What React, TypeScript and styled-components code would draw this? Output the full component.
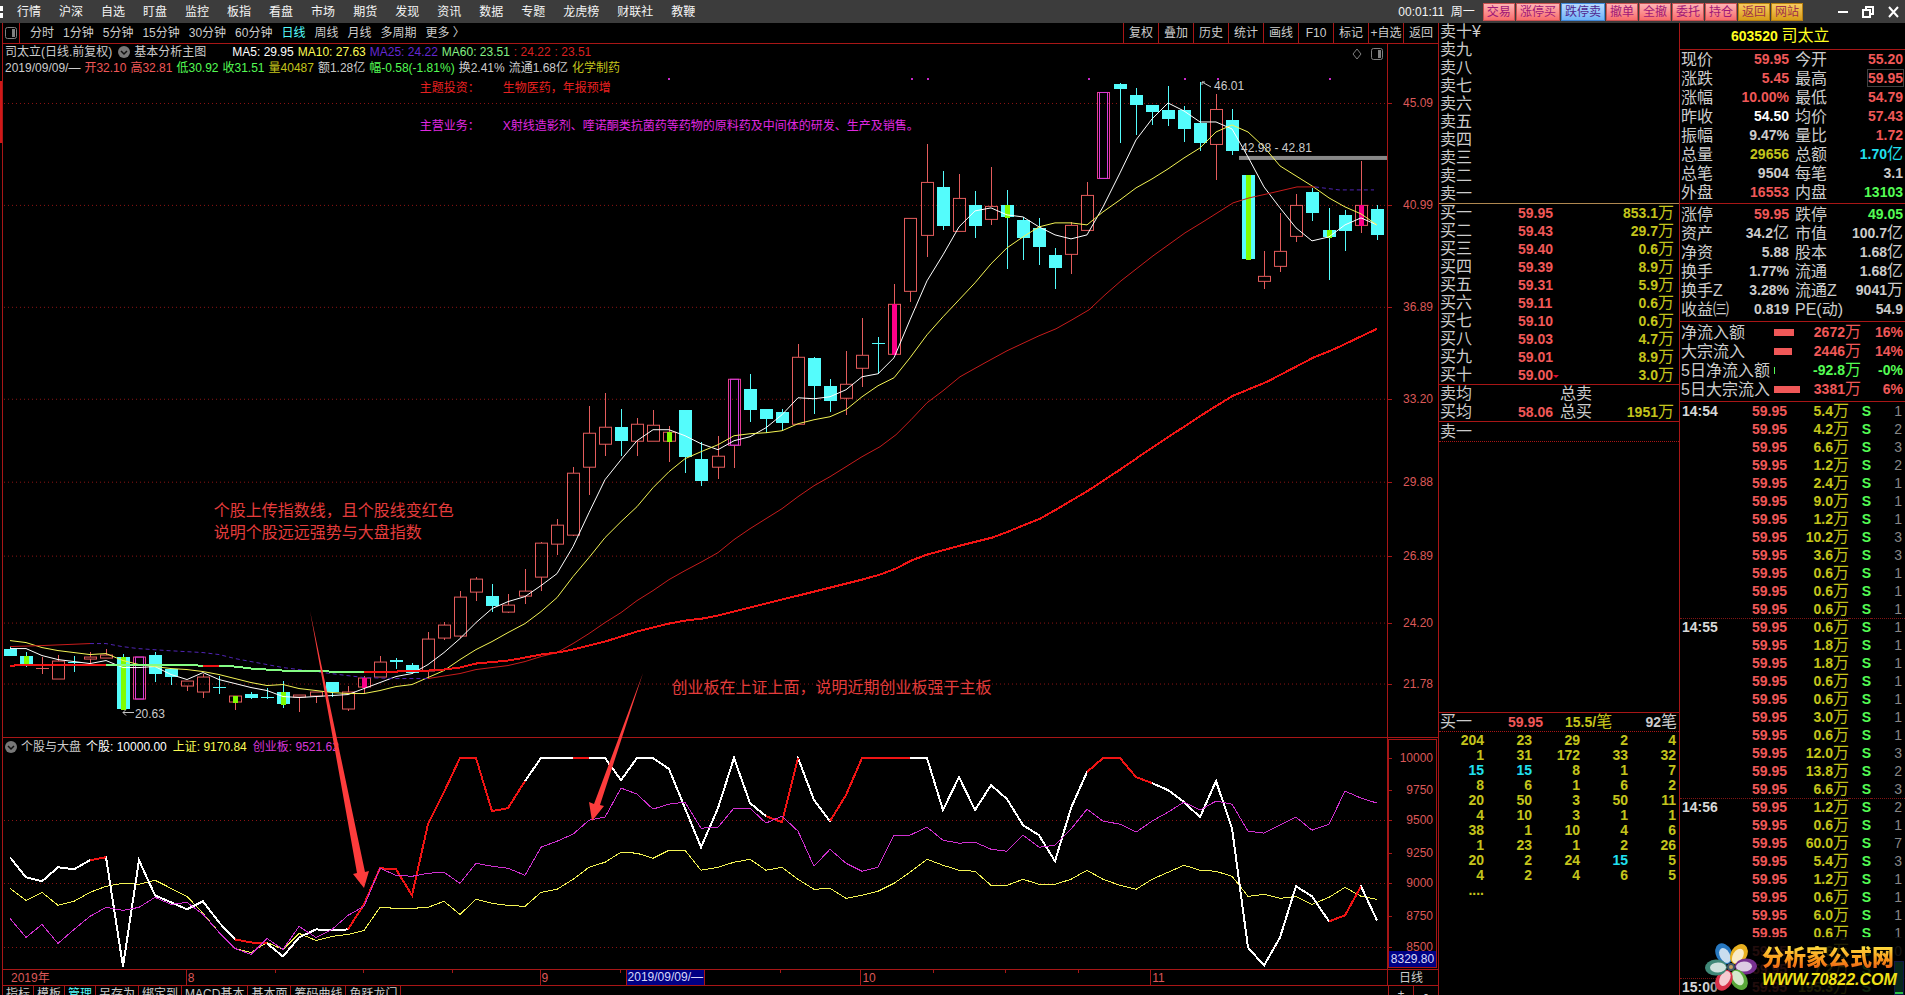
import React from "react";
import styled, { createGlobalStyle, css } from "styled-components";

const RED = "#a81616";
const UP = "#f05858";
const DOWN = "#54fc54";
const CYAN = "#54fcfc";
const YELLOW = "#c4c41c";
const GREY = "#cccccc";

const Global = createGlobalStyle`
  * { box-sizing: border-box; }
  body {
    margin: 0;
    background: #000;
    color: ${GREY};
    font: 12px/16px "Liberation Sans", "Noto Sans CJK SC", sans-serif;
    overflow: hidden;
  }
  button { font: inherit; color: inherit; background: none; border: 0; padding: 0; margin: 0; white-space: nowrap; cursor: pointer; }
  table { border-collapse: separate; border-spacing: 0; }
  td, th { padding: 0; font-weight: inherit; text-align: left; white-space: nowrap; }
`;

const Page = styled.div`
  display: flex;
  flex-direction: column;
  height: 100vh;
  overflow: hidden;
`;

/* ---------- top bar ---------- */

const TopBar = styled.header`
  display: flex;
  align-items: center;
  flex: none;
  height: 23px;
  padding-right: 6px;
  background: #3c3c3c;
  color: #f4f4f4;
`;
const BrandMark = styled.span`
  width: 3px;
  height: 12px;
  margin-right: 14px;
  background: linear-gradient(#fff 5px, transparent 5px, transparent 7px, #fff 7px);
`;
const Menu = styled.nav`
  display: flex;
  gap: 18px;
  flex: 1;
`;
const Clock = styled.span`
  margin-right: 8px;
`;
const QuickBar = styled.div`
  display: flex;
  gap: 1px;
  margin-right: 35px;
`;
const tones = {
  pink: css`background: linear-gradient(#ffb4b4, #f86c6c); border-color: #c85050; color: #a01878;`,
  blue: css`background: linear-gradient(#b8dcff, #70b4f8); border-color: #4088d8; color: #502890;`,
  gold: css`background: linear-gradient(#f8cc60, #d89c18); border-color: #b88010; color: #a03048;`,
};
const QuickButton = styled.button<{ $tone: keyof typeof tones }>`
  height: 18px;
  padding: 0 3px;
  border: 1px solid;
  line-height: 16px;
  ${(p) => tones[p.$tone]}
`;
const WindowButtons = styled.div`
  display: flex;
  align-items: center;
  gap: 14px;
  svg { display: block; }
`;

/* ---------- frame ---------- */

const Body = styled.main`
  display: flex;
  flex: 1;
  min-height: 0;
`;
const ChartColumn = styled.section`
  display: flex;
  flex-direction: column;
  flex: 1;
  min-width: 0;
  margin-left: 2px;
  border-left: 1px solid ${RED};
`;
const PeriodBar = styled.div`
  display: flex;
  flex: none;
  height: 21px;
  border-bottom: 1px solid ${RED};
  line-height: 20px;
`;
const LayoutButton = styled.button`
  display: flex;
  align-items: center;
  width: 17px;
  padding-left: 2px;
  border-right: 1px solid ${RED};
`;
const Periods = styled.div`
  display: flex;
  gap: 9px;
  flex: 1;
  padding-left: 10px;
`;
const Period = styled.button<{ $on?: boolean }>`
  color: ${(p) => (p.$on ? CYAN : GREY)};
`;
const Tool = styled.button`
  width: 35px;
  border-left: 1px solid ${RED};
  text-align: center;
`;

const Panels = styled.div`
  position: relative;
  display: flex;
  flex-direction: column;
  flex: 1;
  min-height: 0;
`;
const Panel = styled.div<{ $grow: number }>`
  display: flex;
  flex: ${(p) => p.$grow} 1 0;
  min-height: 0;
  border-bottom: 1px solid ${RED};
`;
const Plot = styled.div`
  position: relative;
  display: flex;
  flex-direction: column;
  flex: 1;
  min-width: 0;
`;
const Canvas = styled.svg`
  display: block;
  flex: 1;
  width: 100%;
  min-height: 0;
`;
const Axis = styled.div<{ $framed?: boolean }>`
  position: relative;
  flex: none;
  width: 51px;
  border-left: 1px solid ${RED};
  color: #dc5858;
  ${(p) => p.$framed && css`outline: 1px solid ${RED}; outline-offset: -2px;`}
`;
const AxisLabel = styled.span<{ $at: number }>`
  position: absolute;
  right: 5px;
  top: ${(p) => p.$at}%;
  transform: translateY(-50%);
`;
const AxisCursor = styled.span`
  position: absolute;
  right: 2px;
  bottom: 2px;
  left: 1px;
  background: #000084;
  color: #d8d8f8;
  text-align: center;
`;
const Tick = styled.i<{ $at: number }>`
  position: absolute;
  left: 0;
  top: ${(p) => p.$at}%;
  width: 4px;
  height: 1px;
  background: ${RED};
`;
const Legend = styled.div`
  display: flex;
  align-items: center;
  flex: none;
  height: 18px;
  white-space: nowrap;
`;
const LegendItem = styled.span<{ $color?: string; $gap?: number }>`
  color: ${(p) => p.$color ?? GREY};
  margin-right: ${(p) => p.$gap ?? 4}px;
`;
const MainHeader = styled.div`
  flex: none;
  height: 32px;
  padding-left: 2px;
  ${Legend} { height: 16px; }
`;
const LowerHeader = styled(Legend)`
  padding-left: 2px;
`;
const Fold = styled.button`
  display: flex;
  margin-right: 4px;
`;
const CornerIcons = styled.div`
  position: absolute;
  top: 4px;
  right: 4px;
  display: flex;
  gap: 8px;
`;
const Note = styled.span<{ $x: number; $y: number; $color: string; $large?: boolean }>`
  position: absolute;
  left: ${(p) => (p.$x / 1385) * 100}%;
  top: ${(p) => (p.$y / 693) * 100}%;
  color: ${(p) => p.$color};
  white-space: pre;
  ${(p) => p.$large && css`font-size: 16px; line-height: 22px;`}
`;
const ArrowLayer = styled.svg`
  position: absolute;
  inset: 0;
  width: 100%;
  height: 100%;
  pointer-events: none;
`;
const CursorFlag = styled.i`
  position: absolute;
  left: -3px;
  top: 37px;
  width: 2px;
  height: 62px;
  background: #d01818;
`;

const DateRow = styled.div`
  display: flex;
  flex: none;
  height: 16px;
  border-bottom: 1px solid ${RED};
`;
const DateTrack = styled.div`
  position: relative;
  flex: 1;
  color: #dc5858;
`;
const DateMark = styled.span<{ $x: number; $line?: boolean }>`
  position: absolute;
  left: ${(p) => (p.$x / 1385) * 100}%;
  height: 15px;
  padding-left: 1px;
  border-left: 1px solid ${(p) => (p.$line ? RED : "transparent")};
`;
const MinorTick = styled.i<{ $x: number }>`
  position: absolute;
  left: ${(p) => (p.$x / 1385) * 100}%;
  width: 1px;
  height: 3px;
  background: ${RED};
`;
const DateCursor = styled.span`
  position: absolute;
  left: 45%;
  width: 79px;
  height: 15px;
  border: solid ${RED};
  border-width: 0 1px;
  background: #000084;
  color: #d8d8f8;
  line-height: 15px;
  text-align: center;
`;
const PeriodCell = styled.div`
  width: 51px;
  padding-left: 11px;
  border-left: 1px solid ${RED};
`;
const TabStrip = styled.div`
  display: flex;
  flex: none;
  height: 9px;
  overflow: hidden;
`;
const Tab = styled.button<{ $on?: boolean }>`
  height: 16px;
  padding: 0 3px;
  border-right: 1px solid ${RED};
  color: ${(p) => (p.$on ? CYAN : GREY)};
`;
const Spacer = styled.div`
  flex: 1;
`;
const ZoomButton = styled.button`
  width: 25px;
  height: 16px;
  border-left: 1px solid ${RED};
`;

/* ---------- order book ---------- */

const Book = styled.section`
  display: flex;
  flex-direction: column;
  flex: none;
  width: 242px;
  border-left: 1px solid ${RED};
  border-right: 1px solid ${RED};
  font-size: 16px;
  overflow: hidden;
`;
const Sheet = styled.table<{ $row: number }>`
  width: 100%;
  table-layout: fixed;
  td, th {
    height: ${(p) => p.$row}px;
    line-height: ${(p) => p.$row}px;
  }
`;
const Block = styled.div<{ $line?: string; $dotted?: boolean; $top?: number; $bottom?: number; $fill?: boolean }>`
  flex: ${(p) => (p.$fill ? "1" : "none")};
  padding: ${(p) => p.$top ?? 0}px 2px ${(p) => p.$bottom ?? 0}px 1px;
  border-bottom: 1px ${(p) => (p.$dotted ? "dotted" : "solid")} ${(p) => p.$line ?? RED};
`;
const QueueBlock = styled.div`
  flex: none;
  height: 263px;
  padding-top: 1px;
`;
const Col = styled.col<{ $w?: number }>`
  width: ${(p) => (p.$w ? p.$w + "px" : "auto")};
`;
const Cell = styled.td<{ $color?: string; $left?: boolean; $pad?: number; $plain?: boolean }>`
  && {
    color: ${(p) => p.$color ?? GREY};
    text-align: ${(p) => (p.$left ? "left" : "right")};
    padding-right: ${(p) => p.$pad ?? 0}px;
    font-size: 14px;
    font-weight: ${(p) => (p.$plain ? 400 : 700)};
  }
`;
const Unit = styled.span`
  font-size: 16px;
  font-weight: 400;
  line-height: 0;
`;
const Name = styled.th`
  font-size: 16px;
  font-weight: 400;
  color: ${GREY};
`;
const Inset = styled.span`
  padding-left: 6px;
`;
const LowFlag = styled.i`
  display: inline-block;
  border: 3px solid transparent;
  border-top-color: #e01030;
  border-bottom: 0;
  vertical-align: middle;
`;

/* ---------- quote column ---------- */

const Quote = styled.aside`
  position: relative;
  display: flex;
  flex-direction: column;
  flex: none;
  width: 225px;
  font-size: 16px;
  overflow: hidden;
`;
const Title = styled.h1`
  flex: none;
  height: 27px;
  margin: 0;
  padding-left: 51px;
  border-bottom: 1px solid ${RED};
  color: #ffff20;
  font-size: 14px;
  line-height: 26px;
`;
const Boxed = styled.span`
  outline: 1px solid #404040;
`;
const FlowBar = styled.i<{ $w: number; $color: string }>`
  display: block;
  width: ${(p) => p.$w}px;
  height: 7px;
  margin-left: 1px;
  background: ${(p) => p.$color};
`;
const Ticks = styled(Sheet)`
  tr.minute td { border-top: 1px dotted #801414; line-height: 17px; }
`;
const TimeText = styled.span`
  padding-left: 2px;
`;
const Watermark = styled.a`
  position: absolute;
  right: 0;
  bottom: 0;
  display: flex;
  align-items: flex-end;
  width: 200px;
  height: 58px;
  background: linear-gradient(90deg, transparent, rgba(0, 0, 0, 0.86) 30px);
  text-decoration: none;
`;
const Gauge = styled.i`
  position: absolute;
  right: 1px;
  bottom: 0;
  width: 10px;
  height: 34px;
  border: 1px solid #101848;
  background: linear-gradient(#06281c 30px, #28c048 30px);
`;
const SiteText = styled.span`
  position: relative;
  display: flex;
  flex-direction: column;
  padding-bottom: 5px;
  margin-left: 5px;
  white-space: nowrap;
`;
const SiteName = styled.span`
  background: linear-gradient(#ffe040, #f89018 60%, #e85818);
  background-clip: text;
  -webkit-background-clip: text;
  color: transparent;
  font-size: 22px;
  font-weight: 900;
  line-height: 24px;
`;
const SiteUrl = styled.span`
  color: #f0e018;
  font-size: 16px;
  font-style: italic;
  font-weight: 700;
  line-height: 20px;
`;

/* ---------- data ---------- */

type Kind = "up" | "down" | "upCross" | "downCross" | "limit" | "downGreen" | "upGreen" | "upPink";
type Candle = [Kind, number, number, number, number];

// kind, body top, body bottom, high, low
const candles: Candle[] = [
  ["down", 649, 656, 646, 656], ["downGreen", 656, 665, 652, 667], ["upCross", 668, 669, 657, 674],
  ["up", 661, 679, 655, 679], ["downCross", 662, 663, 656, 672], ["up", 657, 659, 652, 663],
  ["up", 655, 658, 649, 658], ["downGreen", 657, 709, 654, 710], ["limit", 657, 699, 657, 699],
  ["down", 655, 674, 652, 682], ["down", 669, 677, 669, 685], ["up", 681, 686, 681, 691],
  ["up", 677, 692, 674, 698], ["downCross", 687, 688, 676, 694], ["upGreen", 696, 702, 696, 710],
  ["down", 694, 698, 692, 699], ["downCross", 697, 698, 688, 699], ["downGreen", 692, 704, 681, 708],
  ["up", 695, 697, 695, 712], ["up", 692, 696, 692, 703], ["down", 682, 692, 682, 697],
  ["up", 692, 709, 686, 711], ["upPink", 678, 687, 676, 694], ["up", 662, 677, 656, 677],
  ["down", 660, 662, 658, 669], ["down", 665, 673, 663, 674], ["up", 639, 671, 632, 678],
  ["up", 625, 638, 622, 640], ["up", 597, 636, 591, 638], ["up", 579, 592, 577, 601],
  ["down", 596, 606, 584, 612], ["up", 605, 612, 594, 613], ["up", 591, 596, 569, 604],
  ["up", 543, 577, 542, 591], ["up", 525, 544, 519, 555], ["up", 473, 535, 467, 536],
  ["up", 433, 467, 406, 495], ["up", 427, 444, 393, 456], ["down", 427, 441, 409, 456],
  ["up", 424, 441, 418, 456], ["up", 425, 441, 410, 441], ["upGreen", 432, 441, 426, 462],
  ["down", 410, 457, 410, 473], ["down", 459, 481, 442, 486], ["up", 456, 467, 436, 479],
  ["limit", 379, 445, 379, 468], ["down", 389, 410, 374, 422], ["down", 409, 419, 409, 433],
  ["down", 412, 423, 409, 431], ["up", 357, 424, 344, 424], ["down", 358, 386, 357, 414],
  ["down", 386, 401, 379, 412], ["up", 384, 398, 351, 415], ["up", 355, 368, 318, 387],
  ["downCross", 343, 344, 337, 374], ["upPink", 304, 354, 284, 354], ["up", 218, 291, 218, 302],
  ["up", 182, 235, 144, 257], ["down", 187, 226, 171, 230], ["up", 198, 231, 174, 231],
  ["down", 205, 226, 191, 238], ["up", 206, 219, 167, 225], ["downGreen", 205, 217, 190, 269],
  ["down", 220, 238, 217, 260], ["down", 228, 247, 218, 265], ["down", 255, 268, 248, 289],
  ["up", 225, 254, 222, 274], ["up", 195, 230, 182, 230], ["limit", 92, 178, 92, 178],
  ["down", 84, 89, 83, 143], ["down", 95, 105, 88, 135], ["down", 105, 112, 105, 125],
  ["down", 110, 119, 86, 126], ["down", 110, 129, 106, 142], ["down", 123, 143, 82, 151],
  ["up", 109, 144, 94, 180], ["down", 120, 151, 109, 155], ["downGreen", 175, 259, 175, 260],
  ["up", 276, 281, 251, 289], ["up", 251, 266, 213, 272], ["up", 205, 236, 194, 242],
  ["down", 192, 213, 188, 221], ["downGreen", 230, 237, 208, 280], ["down", 215, 231, 210, 251],
  ["upPink", 205, 225, 161, 233], ["down", 209, 235, 205, 240],
];

const ma5 = [649, 649, 656, 660, 662, 664, 661, 668, 668, 667, 675, 680, 673, 680, 684, 688, 691, 697, 698, 697, 696, 695, 689, 683, 677, 674, 665, 653, 639, 623, 609, 602, 597, 586, 574, 547, 513, 480, 460, 441, 430, 430, 436, 444, 450, 441, 437, 428, 415, 398, 399, 397, 390, 377, 374, 358, 320, 281, 255, 227, 211, 208, 215, 217, 227, 235, 239, 235, 207, 173, 140, 119, 103, 111, 122, 122, 129, 157, 187, 208, 228, 241, 237, 225, 218, 225];
const ma10 = [641, 643, 648, 651, 653, 655, 654, 661, 665, 667, 669, 670, 672, 675, 679, 683, 686, 685, 689, 691, 693, 694, 694, 691, 687, 685, 678, 671, 660, 650, 642, 633, 624, 612, 598, 577, 558, 538, 522, 507, 488, 472, 459, 452, 445, 436, 434, 433, 431, 424, 420, 417, 410, 397, 386, 378, 358, 335, 317, 300, 283, 264, 248, 237, 227, 223, 223, 225, 212, 200, 188, 179, 169, 158, 148, 132, 125, 132, 147, 166, 176, 186, 198, 207, 214, 225];

const stock = [857, 877, 881, 867, 869, 860, 857, 966, 860, 895, 902, 909, 901, 922, 939, 942, 943, 956, 937, 929, 930, 929, 904, 868, 869, 895, 824, 792, 758, 758, 811, 808, 781, 758, 758, 758, 758, 758, 780, 758, 758, 769, 808, 847, 808, 758, 803, 816, 822, 758, 800, 821, 795, 758, 758, 758, 758, 758, 810, 777, 810, 785, 799, 825, 835, 861, 808, 772, 758, 758, 777, 783, 790, 802, 817, 781, 828, 947, 965, 937, 886, 896, 921, 915, 886, 920];
const stockHot: [number, number][] = [[5, 6], [14, 16], [21, 32], [35, 36], [47, 49], [51, 56], [67, 71], [82, 84]];
const shanghai = [888, 900, 892, 905, 901, 892, 886, 883, 884, 880, 888, 896, 913, 932, 948, 952, 942, 949, 933, 940, 936, 934, 930, 907, 908, 908, 907, 901, 914, 899, 903, 905, 906, 892, 889, 879, 867, 862, 852, 853, 858, 850, 850, 870, 867, 862, 859, 870, 867, 879, 889, 888, 898, 895, 891, 883, 872, 859, 865, 870, 871, 885, 885, 879, 884, 884, 879, 870, 879, 885, 889, 879, 872, 865, 870, 871, 876, 896, 894, 898, 896, 904, 897, 887, 896, 899];
const chinext = [918, 937, 924, 943, 929, 916, 907, 910, 907, 897, 904, 902, 914, 932, 948, 954, 938, 949, 926, 937, 929, 915, 906, 868, 875, 876, 873, 872, 883, 863, 866, 868, 875, 847, 841, 834, 820, 817, 788, 794, 809, 804, 802, 828, 827, 808, 808, 823, 816, 831, 866, 849, 863, 871, 867, 835, 835, 827, 840, 843, 842, 849, 851, 835, 847, 845, 829, 809, 821, 824, 832, 821, 812, 802, 810, 801, 804, 831, 833, 825, 817, 830, 824, 791, 798, 803];

const ma25a = "10,647 42,646 90,644";
const ma25b = "90,644 106,644 122,647 138,649 167,651 203,653 219,655 235,659 251,662 267,665 283,668 299,670 315,672 347,676 364,678 396,679 428,679";
const ma25c = "428,679 460,674 476,670 508,666 525,662 541,657 557,653 573,644 589,634 605,623 621,613 637,601 653,591 669,580 685,571 702,562 718,553 734,540 750,529 766,519 782,509 798,497 814,486 830,477 846,467 862,457 880,447 896,435 911,420 927,403 943,391 960,377 985,363 1007,351 1039,336 1056,329 1072,320 1089,310 1105,295 1121,281 1153,256 1185,233 1203,222 1233,203 1249,198 1267,194 1297,187 1315,187";
const ma25d = "1315,187 1339,190 1374,190";
const ma60Cold = "106,665 203,666 M219,666 235,667 251,669 267,670 283,671 331,672 364,672";
const ma60Hot = "428,671 444,670 460,668 476,664 508,661 525,658 541,655 557,653 573,650 589,646 605,642 621,637 637,632 653,628 669,624 685,621 702,619 718,616 734,612 750,608 782,600 814,592 846,584 862,580 880,575 896,569 911,561 927,555 960,546 992,538 1008,532 1040,519 1056,510 1088,491 1120,470 1152,448 1184,427 1210,410 1233,396 1267,382 1313,358 1335,349 1377,329";

const cx = (i: number) => Math.round(10 + 16.08 * i);
const series = (ys: number[], from = 0, to = ys.length - 1) =>
  ys.slice(from, to + 1).map((y, k) => `${cx(from + k)},${y}`).join(" ");

const mainGrid: [string, number][] = [["45.09", 103], ["40.99", 205], ["36.89", 307], ["33.20", 399], ["29.88", 482], ["26.89", 556], ["24.20", 623], ["21.78", 684]];
const lowerGrid: [string, number][] = [["10000", 758], ["9750", 790], ["9500", 820], ["9250", 853], ["9000", 883], ["8750", 916], ["8500", 947]];

const line = { fill: "none", shapeRendering: "crispEdges" as const, vectorEffect: "non-scaling-stroke" as const };

function GridLines({ ys }: { ys: number[] }) {
  return (
    <>
      {ys.map((y) => (
        <line key={y} x1="4" x2="1388" y1={y + 0.5} y2={y + 0.5} stroke="#8c1414" strokeDasharray="1 3" {...line} />
      ))}
    </>
  );
}

function CandleShape({ c: [kind, top, bottom, high, low], x }: { c: Candle; x: number }) {
  const down = kind.startsWith("down");
  const color = down ? CYAN : "#e45c5c";
  const h = bottom - top;
  if (kind.endsWith("Cross")) {
    return (
      <g fill={color}>
        <rect x={x} y={high} width="1" height={low - high} />
        <rect x={x - 6} y={top} width="13" height="1" />
      </g>
    );
  }
  return (
    <g>
      <rect x={x} y={high} width="1" height={Math.max(0, top - high)} fill={color} />
      <rect x={x} y={bottom} width="1" height={Math.max(0, low - bottom)} fill={color} />
      {down ? (
        <rect x={x - 6} y={top} width="13" height={h} fill={color} />
      ) : (
        <rect x={x - 5.5} y={top + 0.5} width="12" height={h} fill="none" stroke={kind === "limit" ? "#e83c94" : color} />
      )}
      {kind === "limit" && <rect x={x - 3.5} y={top + 0.5} width="8" height={h} fill="none" stroke="#d83cd8" />}
      {kind.endsWith("Green") && <rect x={x - 2} y={top} width="5" height={h + 1} fill="#80fc00" />}
      {kind === "upPink" && <rect x={x - 2} y={top} width="5" height={h + 1} fill="#fc0088" />}
    </g>
  );
}

const FoldIcon = () => (
  <svg width="12" height="12" viewBox="0 0 12 12">
    <circle cx="6" cy="6" r="6" fill="#787878" />
    <path d="M3 5l3 3 3-3" fill="none" stroke="#101010" strokeWidth="1.5" />
  </svg>
);
const SplitIcon = () => (
  <svg width="12" height="12" viewBox="0 0 12 12">
    <rect x=".5" y=".5" width="11" height="11" rx="2" fill="none" stroke="#808080" />
    <rect x="7" y="2" width="3" height="8" fill="#808080" />
  </svg>
);

function Num({ v }: { v: string }) {
  const m = /^([-\d.%/]*)(.*)$/.exec(v)!;
  return <>{m[1]}{m[2] && <Unit>{m[2]}</Unit>}</>;
}

const menu = ["行情", "沪深", "自选", "盯盘", "监控", "板指", "看盘", "市场", "期货", "发现", "资讯", "数据", "专题", "龙虎榜", "财联社", "教鞭"];
const quick: [string, keyof typeof tones][] = [["交易", "pink"], ["涨停买", "pink"], ["跌停卖", "blue"], ["撤单", "pink"], ["全撤", "pink"], ["委托", "pink"], ["持仓", "pink"], ["返回", "gold"], ["网站", "gold"]];
const periods = ["分时", "1分钟", "5分钟", "15分钟", "30分钟", "60分钟", "日线", "周线", "月线", "多周期", "更多 〉"];
const tools = ["复权", "叠加", "历史", "统计", "画线", "F10", "标记", "+自选", "返回"];
const tabs = ["指标", "模板", "管理", "另存为", "绑定到", "MACD基本", "基本面", "筹码曲线", "鱼跃龙门"];
const levels = ["一", "二", "三", "四", "五", "六", "七", "八", "九", "十"];
const bids = [["59.95", "853.1万"], ["59.43", "29.7万"], ["59.40", "0.6万"], ["59.39", "8.9万"], ["59.31", "5.9万"], ["59.11", "0.6万"], ["59.10", "0.6万"], ["59.03", "4.7万"], ["59.01", "8.9万"], ["59.00", "3.0万"]];
const queue = [["204", "23", "29", "2", "4"], ["1", "31", "172", "33", "32"], ["*15", "*15", "8", "1", "7"], ["8", "6", "1", "6", "2"], ["20", "50", "3", "50", "11"], ["4", "10", "3", "1", "1"], ["38", "1", "10", "4", "6"], ["1", "23", "1", "2", "26"], ["20", "2", "24", "*15", "5"], ["4", "2", "4", "6", "5"], ["....", "", "", "", ""]];

type Q = [string, string, string, string, string, string];
const quoteA: Q[] = [
  ["现价", "59.95", UP, "今开", "55.20", UP], ["涨跌", "5.45", UP, "最高", "59.95", UP],
  ["涨幅", "10.00%", UP, "最低", "54.79", UP], ["昨收", "54.50", "#fff", "均价", "57.43", UP],
  ["振幅", "9.47%", GREY, "量比", "1.72", UP], ["总量", "29656", YELLOW, "总额", "1.70亿", "#20e0f0"],
  ["总笔", "9504", GREY, "每笔", "3.1", GREY], ["外盘", "16553", UP, "内盘", "13103", DOWN],
];
const quoteB: Q[] = [
  ["涨停", "59.95", UP, "跌停", "49.05", DOWN], ["资产", "34.2亿", GREY, "市值", "100.7亿", GREY],
  ["净资", "5.88", GREY, "股本", "1.68亿", GREY], ["换手", "1.77%", GREY, "流通", "1.68亿", GREY],
  ["换手Z", "3.28%", GREY, "流通Z", "9041万", GREY], ["收益㈢", "0.819", GREY, "PE(动)", "54.9", GREY],
];
const flows: [string, number, string, string, string][] = [
  ["净流入额", 20, "2672万", "16%", UP], ["大宗流入", 18, "2446万", "14%", UP],
  ["5日净流入额", 1, "-92.8万", "-0%", DOWN], ["5日大宗流入", 26, "3381万", "6%", UP],
];
const trades: [string, number, string?][] = [
  ["5.4", 1, "14:54"], ["4.2", 2], ["6.6", 3], ["1.2", 2], ["2.4", 1], ["9.0", 1], ["1.2", 1], ["10.2", 3], ["3.6", 3], ["0.6", 1], ["0.6", 1], ["0.6", 1],
  ["0.6", 1, "14:55"], ["1.8", 1], ["1.8", 1], ["0.6", 1], ["0.6", 1], ["3.0", 1], ["0.6", 1], ["12.0", 3], ["13.8", 2], ["6.6", 3],
  ["1.2", 2, "14:56"], ["0.6", 1], ["60.0", 7], ["5.4", 3], ["1.2", 1], ["0.6", 1], ["6.0", 1], ["0.6", 1], ["0.6", 0], ["7.2", 5],
  ["195.3", 5, "15:00"],
];

function QuoteTable({ rows }: { rows: Q[] }) {
  return (
    <Sheet $row={19}>
      <colgroup><Col $w={49} /><Col $w={59} /><Col $w={54} /><Col /></colgroup>
      <tbody>
        {rows.map(([a, av, ac, b, bv, bc]) => (
          <tr key={a}>
            <Name>{a}</Name>
            <Cell $color={ac}><Num v={av} /></Cell>
            <Name><Inset>{b}</Inset></Name>
            <Cell $color={bc}>{b === "最高" ? <Boxed>{bv}</Boxed> : <Num v={bv} />}</Cell>
          </tr>
        ))}
      </tbody>
    </Sheet>
  );
}

const petals: [number, string][] = [[-28, "#2878c0"], [32, "#e8b020"], [88, "#783090"], [148, "#58a838"], [208, "#d83048"], [268, "#408878"]];

export default function App() {
  return (
    <Page>
      <Global />
      <TopBar>
        <BrandMark />
        <Menu>{menu.map((m) => <button key={m}>{m}</button>)}</Menu>
        <Clock>00:01:11&nbsp; 周一</Clock>
        <QuickBar>
          {quick.map(([t, tone]) => <QuickButton key={t} $tone={tone}>{t}</QuickButton>)}
        </QuickBar>
        <WindowButtons>
          <button aria-label="最小化"><svg width="10" height="12"><path d="M0 6h10" stroke="#fff" strokeWidth="2" /></svg></button>
          <button aria-label="还原">
            <svg width="12" height="12" fill="none" stroke="#fff" strokeWidth="2"><path d="M4 4V1h7v7H8" /><path d="M1 4h7v7H1z" /></svg>
          </button>
          <button aria-label="关闭"><svg width="11" height="12"><path d="M1 1l9 10M10 1L1 11" stroke="#fff" strokeWidth="2" /></svg></button>
        </WindowButtons>
      </TopBar>

      <Body>
        <ChartColumn>
          <PeriodBar>
            <LayoutButton aria-label="布局"><SplitIcon /></LayoutButton>
            <Periods>{periods.map((p) => <Period key={p} $on={p === "日线"}>{p}</Period>)}</Periods>
            {tools.map((t) => <Tool key={t}>{t}</Tool>)}
          </PeriodBar>

          <Panels>
            <Panel $grow={694}>
              <Plot>
                <MainHeader>
                  <Legend>
                    <LegendItem $gap={6}>司太立(日线.前复权)</LegendItem>
                    <Fold aria-label="指标菜单"><FoldIcon /></Fold>
                    <LegendItem $gap={26}>基本分析主图</LegendItem>
                    <LegendItem $color="#fff">MA5: 29.95</LegendItem>
                    <LegendItem $color="#fcfc54">MA10: 27.63</LegendItem>
                    <LegendItem $color="#6428d0">MA25: 24.22</LegendItem>
                    <LegendItem $color="#84f084">MA60: 23.51</LegendItem>
                    <LegendItem $color="#d82020">: 24.22</LegendItem>
                    <LegendItem $color="#d82020">: 23.51</LegendItem>
                  </Legend>
                  <Legend>
                    <LegendItem>2019/09/09/—</LegendItem>
                    <LegendItem $color={UP}>开32.10</LegendItem>
                    <LegendItem $color={UP}>高32.81</LegendItem>
                    <LegendItem $color={DOWN}>低30.92</LegendItem>
                    <LegendItem $color={DOWN}>收31.51</LegendItem>
                    <LegendItem $color={YELLOW}>量40487</LegendItem>
                    <LegendItem>额1.28亿</LegendItem>
                    <LegendItem $color={DOWN}>幅-0.58(-1.81%)</LegendItem>
                    <LegendItem>换2.41%</LegendItem>
                    <LegendItem>流通1.68亿</LegendItem>
                    <LegendItem $color={YELLOW}>化学制药</LegendItem>
                  </Legend>
                </MainHeader>
                <Canvas viewBox="3 76 1384 661" preserveAspectRatio="none">
                  <GridLines ys={mainGrid.map((g) => g[1])} />
                  {[668, 911, 927, 1088, 1184, 1217, 1329].map((x) => <rect key={x} x={x} y="78" width="2" height="2" fill="#c828c8" />)}
                  <g shapeRendering="crispEdges">
                    {candles.map((c, i) => <CandleShape key={i} c={c} x={cx(i)} />)}
                  </g>
                  <rect x="1239" y="156" width="149" height="4" fill="#888" />
                  <polyline points={series(ma5)} stroke="#fff" {...line} />
                  <polyline points={series(ma10)} stroke="#f4f454" {...line} />
                  <polyline points={ma25a} stroke="#c81c1c" {...line} />
                  <polyline points={ma25b} stroke="#5024b4" strokeDasharray="4 3" {...line} />
                  <polyline points={ma25c} stroke="#c81c1c" {...line} />
                  <polyline points={ma25d} stroke="#5024b4" strokeDasharray="4 3" {...line} />
                  <path d="M10,666 106,665 M203,666 219,666 M364,672 396,672 428,671" stroke="#f01414" strokeWidth="2" {...line} />
                  <path d={`M${ma60Cold}`} stroke="#84fc84" strokeWidth="2" {...line} />
                  <polyline points={ma60Hot} stroke="#f01414" strokeWidth="2" {...line} />
                  <path d="M1211,87 1202,82 M1202,85 V82 H1205" stroke="#c8c8c8" {...line} />
                  <path d="M134,713 H123 M126,710 123,713 126,716" stroke="#c8c8c8" {...line} />
                </Canvas>
                <CornerIcons>
                  <svg width="12" height="12"><path d="M6 1l4 5-4 5-4-5z" fill="none" stroke="#808080" /></svg>
                  <SplitIcon />
                </CornerIcons>
                <Note $x={417} $y={36} $color="#e82020">主题投资：</Note>
                <Note $x={500} $y={36} $color="#e82020">生物医药，年报预增</Note>
                <Note $x={417} $y={74} $color="#e028e0">主营业务：</Note>
                <Note $x={500} $y={74} $color="#e028e0">X射线造影剂、喹诺酮类抗菌药等药物的原料药及中间体的研发、生产及销售。</Note>
                <Note $x={1212} $y={34} $color={GREY}>46.01</Note>
                <Note $x={1239} $y={96} $color={GREY}>42.98 - 42.81</Note>
                <Note $x={132} $y={662} $color={GREY}>20.63</Note>
                <Note $x={211} $y={456} $color="#e43c3c" $large>{"个股上传指数线，且个股线变红色\n说明个股远远强势与大盘指数"}</Note>
                <Note $x={669} $y={633} $color="#e43c3c" $large>创业板在上证上面，说明近期创业板强于主板</Note>
              </Plot>
              <Axis>
                {mainGrid.map(([t, y]) => (
                  <React.Fragment key={t}>
                    <Tick $at={((y - 44) / 693) * 100} />
                    <AxisLabel $at={((y - 44) / 693) * 100}>{t}</AxisLabel>
                  </React.Fragment>
                ))}
              </Axis>
            </Panel>
            <Panel $grow={232}>
              <Plot>
                <LowerHeader>
                  <Fold aria-label="副图菜单"><FoldIcon /></Fold>
                  <LegendItem $gap={5}>个股与大盘</LegendItem>
                  <LegendItem $color="#fff" $gap={6}>个股: 10000.00</LegendItem>
                  <LegendItem $color="#fcfc54" $gap={6}>上证: 9170.84</LegendItem>
                  <LegendItem $color="#d838d8">创业板: 9521.62</LegendItem>
                </LowerHeader>
                <Canvas viewBox="3 756 1384 213" preserveAspectRatio="none">
                  <GridLines ys={[820, 883, 947]} />
                  <polyline points={series(shanghai)} stroke="#f4f454" {...line} />
                  <polyline points={series(stock)} stroke="#fff" strokeWidth="2" {...line} />
                  {stockHot.map(([a, b]) => (
                    <polyline key={a} points={series(stock, a, b)} stroke="#f01414" strokeWidth="2" {...line} />
                  ))}
                  <polyline points={series(chinext)} stroke="#d030d0" {...line} />
                </Canvas>
              </Plot>
              <Axis $framed>
                {lowerGrid.map(([t, y]) => (
                  <React.Fragment key={t}>
                    <Tick $at={((y - 738) / 231) * 100} />
                    <AxisLabel $at={((y - 738) / 231) * 100}>{t}</AxisLabel>
                  </React.Fragment>
                ))}
                <AxisCursor>8329.80</AxisCursor>
              </Axis>
            </Panel>
            <ArrowLayer viewBox="3 44 1435 926" preserveAspectRatio="none" fill="#fc3c3c">
              <path d="M310 611l55 261 4-1-5 17-11-14 4-1z" />
              <path d="M643 673l-43 132 4 1-12 15-3-19 5 2z" />
            </ArrowLayer>
            <CursorFlag />
          </Panels>

          <DateRow>
            <DateTrack>
              <DateMark $x={6}>2019年</DateMark>
              <DateMark $x={183} $line>8</DateMark>
              <DateMark $x={537} $line>9</DateMark>
              <DateMark $x={858} $line>10</DateMark>
              <DateMark $x={1148} $line>11</DateMark>
              {[272, 360, 449, 617, 778, 931, 1003, 1076].map((x) => <MinorTick key={x} $x={x} />)}
              <DateCursor>2019/09/09/—</DateCursor>
            </DateTrack>
            <PeriodCell>日线</PeriodCell>
          </DateRow>
          <TabStrip>
            {tabs.map((t) => <Tab key={t} $on={t === "管理"}>{t}</Tab>)}
            <Spacer />
            <ZoomButton>+</ZoomButton>
            <ZoomButton>-</ZoomButton>
          </TabStrip>
        </ChartColumn>

        <Book>
          <Block $line="#b08850">
            <Sheet $row={18}>
              <tbody>
                {[...levels].reverse().map((l) => <tr key={l}><Name>卖{l}{l === "十" && "¥"}</Name></tr>)}
              </tbody>
            </Sheet>
          </Block>
          <Block>
            <Sheet $row={18}>
              <colgroup><Col $w={78} /><Col $w={42} /><Col /></colgroup>
              <tbody>
                {bids.map(([p, v], i) => (
                  <tr key={p}>
                    <Name>买{levels[i]}</Name>
                    <Cell $left $color={UP}>{p}{i === 9 && <LowFlag />}</Cell>
                    <Cell $color={YELLOW} $pad={3}><Num v={v} /></Cell>
                  </tr>
                ))}
              </tbody>
            </Sheet>
          </Block>
          <Block>
            <Sheet $row={18}>
              <colgroup><Col $w={78} /><Col $w={42} /><Col $w={40} /><Col /></colgroup>
              <tbody>
                <tr><Name>卖均</Name><Cell /><Name>总卖</Name><Cell /></tr>
                <tr>
                  <Name>买均</Name><Cell $left $color={UP}>58.06</Cell><Name>总买</Name>
                  <Cell $color={YELLOW} $pad={3}><Num v="1951万" /></Cell>
                </tr>
              </tbody>
            </Sheet>
          </Block>
          <Block $dotted $top={1}>
            <Sheet $row={18}><tbody><tr><Name>卖一</Name></tr></tbody></Sheet>
          </Block>
          <Block $fill />
          <Block $dotted>
            <Sheet $row={18}>
              <colgroup><Col $w={68} /><Col $w={57} /><Col $w={54} /><Col /></colgroup>
              <tbody>
                <tr>
                  <Name>买一</Name>
                  <Cell $left $color={UP}>59.95</Cell>
                  <Cell $left $color={YELLOW}><Num v="15.5/笔" /></Cell>
                  <Cell><Num v="92笔" /></Cell>
                </tr>
              </tbody>
            </Sheet>
          </Block>
          <QueueBlock>
            <Sheet $row={15}>
              <tbody>
                {queue.map((row, i) => (
                  <tr key={i}>
                    {row.map((v, k) => (
                      <Cell key={k} $pad={3} $color={v[0] === "*" ? "#20e0f0" : YELLOW}>{v.replace("*", "")}</Cell>
                    ))}
                  </tr>
                ))}
              </tbody>
            </Sheet>
          </QueueBlock>
        </Book>

        <Quote>
          <Title>603520 <Unit>司太立</Unit></Title>
          <Block $bottom={1}><QuoteTable rows={quoteA} /></Block>
          <Block $top={1} $bottom={2}><QuoteTable rows={quoteB} /></Block>
          <Block $top={1} $bottom={2}>
            <Sheet $row={19}>
              <colgroup><Col $w={92} /><Col $w={27} /><Col $w={61} /><Col /></colgroup>
              <tbody>
                {flows.map(([n, w, v, p, c]) => (
                  <tr key={n}>
                    <Name>{n}</Name>
                    <td><FlowBar $w={w} $color={c} /></td>
                    <Cell $color={c}><Num v={v} /></Cell>
                    <Cell $color={c}>{p}</Cell>
                  </tr>
                ))}
              </tbody>
            </Sheet>
          </Block>
          <Ticks $row={18}>
            <colgroup><Col $w={72} /><Col $w={35} /><Col $w={62} /><Col $w={22} /><Col /></colgroup>
            <tbody>
              {trades.map(([amount, n, time], i) => (
                <tr key={i} className={time && i ? "minute" : undefined}>
                  <Cell $left $color="#d8d8d8"><TimeText>{time}</TimeText></Cell>
                  <Cell $color={UP}>59.95</Cell>
                  <Cell $color={YELLOW}><Num v={amount + "万"} /></Cell>
                  <Cell $color={DOWN}>S</Cell>
                  <Cell $plain $color="#888" $pad={3}>{n}</Cell>
                </tr>
              ))}
            </tbody>
          </Ticks>
          <Watermark href="#site">
            <Gauge />
            <svg width="52" height="54" viewBox="-26 -26 52 54">
              {petals.map(([a, c]) => (
                <g key={a} transform={`rotate(${a})`}>
                  <ellipse cx="0" cy="-15" rx="8" ry="11" fill={c} />
                  <ellipse cx="0" cy="-13" rx="5" ry="8" fill="#fff" opacity=".75" />
                </g>
              ))}
              <circle r="4" fill="#405868" />
              <circle r="2" fill="#c8a060" />
            </svg>
            <SiteText>
              <SiteName>分析家公式网</SiteName>
              <SiteUrl>WWW.70822.COM</SiteUrl>
            </SiteText>
          </Watermark>
        </Quote>
      </Body>
    </Page>
  );
}
